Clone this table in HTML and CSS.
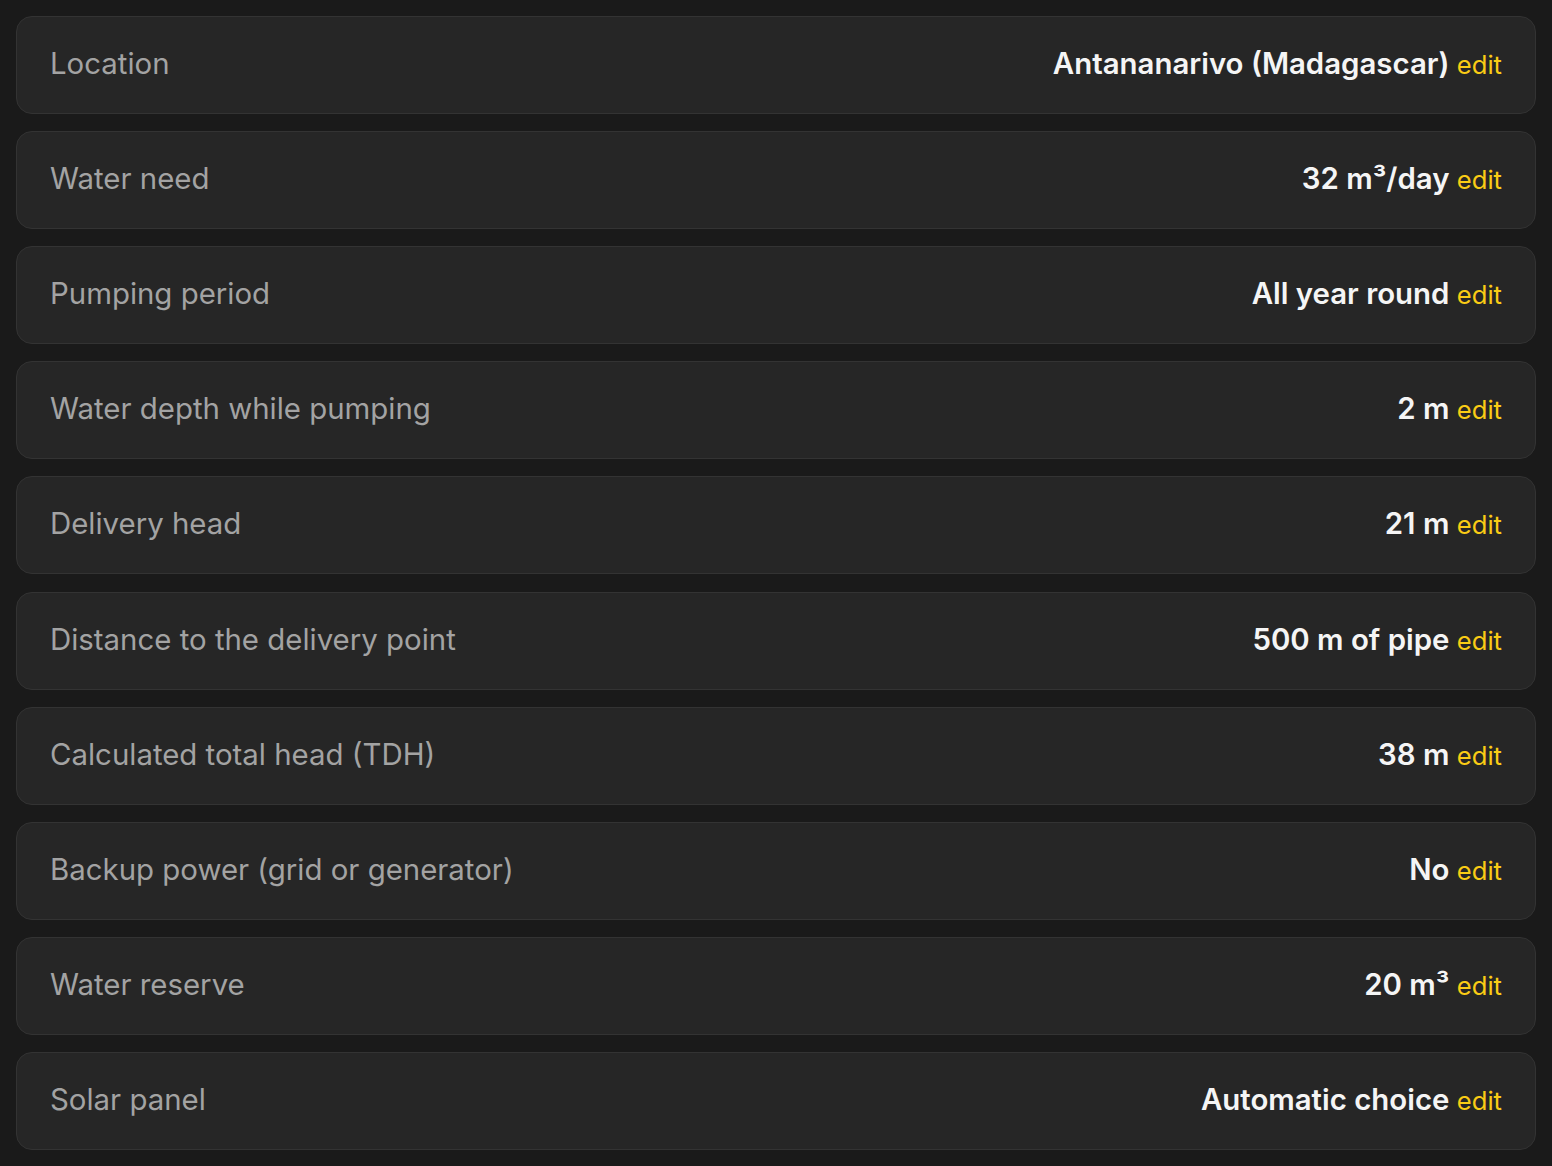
FILE: index.html
```html
<!DOCTYPE html>
<html lang="en">
<head>
  <meta charset="UTF-8" />
  <meta name="viewport" content="width=device-width, initial-scale=1.0" />
  <title>Pump sizing summary</title>
  <link rel="stylesheet" href="styles.css">
</head>
<body>
  <div class="summary">
    <div class="summary-row">
      <span class="label">Location</span>
      <span class="value">Antananarivo (Madagascar) <a class="edit" href="#">edit</a></span>
    </div>
    <div class="summary-row">
      <span class="label">Water need</span>
      <span class="value">32 m³/day <a class="edit" href="#">edit</a></span>
    </div>
    <div class="summary-row">
      <span class="label">Pumping period</span>
      <span class="value">All year round <a class="edit" href="#">edit</a></span>
    </div>
    <div class="summary-row">
      <span class="label">Water depth while pumping</span>
      <span class="value">2 m <a class="edit" href="#">edit</a></span>
    </div>
    <div class="summary-row">
      <span class="label">Delivery head</span>
      <span class="value">21 m <a class="edit" href="#">edit</a></span>
    </div>
    <div class="summary-row">
      <span class="label">Distance to the delivery point</span>
      <span class="value">500 m of pipe <a class="edit" href="#">edit</a></span>
    </div>
    <div class="summary-row">
      <span class="label">Calculated total head (TDH)</span>
      <span class="value">38 m <a class="edit" href="#">edit</a></span>
    </div>
    <div class="summary-row">
      <span class="label">Backup power (grid or generator)</span>
      <span class="value">No <a class="edit" href="#">edit</a></span>
    </div>
    <div class="summary-row">
      <span class="label">Water reserve</span>
      <span class="value">20 m³ <a class="edit" href="#">edit</a></span>
    </div>
    <div class="summary-row">
      <span class="label">Solar panel</span>
      <span class="value">Automatic choice <a class="edit" href="#">edit</a></span>
    </div>
  </div>
</body>
</html>
```

FILE: styles.css
```css
body {
  margin: 0;
  background-color: #1a1a1a;
  font-family: Inter, "Noto Sans", sans-serif;
}
.summary {
  display: flex;
  flex-direction: column;
  gap: 17.12px;
  padding: 16px;
}
.summary-row {
  display: flex;
  justify-content: space-between;
  align-items: baseline;
  padding: 31px 33px 32px;
  background-color: #262626;
  border: 1px solid #333333;
  border-radius: 16px;
  line-height: 32px;
}
.label {
  font-size: 29.4px;
  color: #a3a3a3;
}
.value {
  font-size: 29.4px;
  font-weight: 600;
  color: #f5f5f5;
}
.edit {
  font-size: 25.6px;
  font-weight: 400;
  color: #facc15;
  text-decoration: none;
}
```
